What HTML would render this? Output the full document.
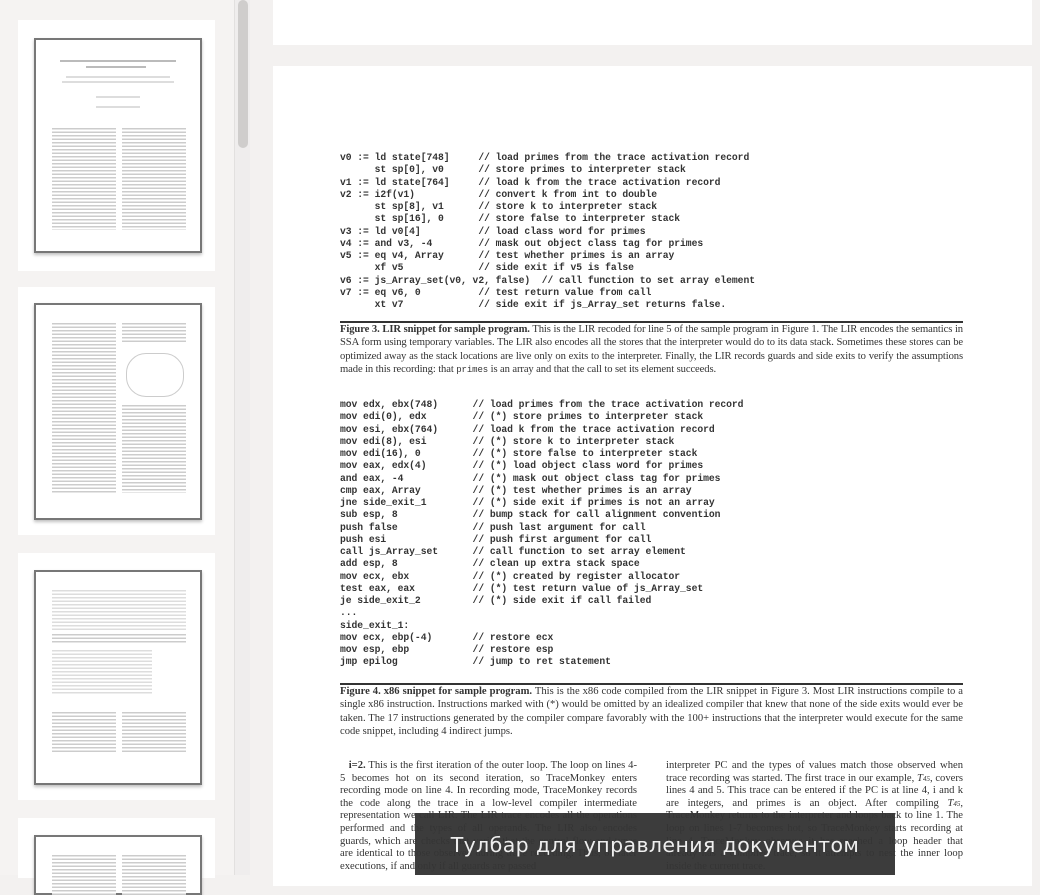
<!DOCTYPE html>
<html><head><meta charset="utf-8"><style>
*{margin:0;padding:0;box-sizing:border-box}
body{width:1040px;height:875px;overflow:hidden;background:#f3f1f0;position:relative;font-family:"Liberation Serif",serif;color:#222}
.side{position:absolute;left:0;top:0;width:234px;height:875px;background:#f5f3f2}
.card{position:absolute;left:18px;width:197px;background:#fff}
.th{position:absolute;left:16px;width:168px;border:2px solid #777;background:#fff;box-shadow:0 2px 3px rgba(0,0,0,.25)}
.ln{position:absolute;height:1.5px;background:#bbb}
.sb{position:absolute;left:234px;top:0;width:16px;height:875px;background:#efeded;border-left:1px solid #e2e0df}
.thumb{position:absolute;left:238px;top:0;width:10px;height:148px;background:#cfcdcc;border-radius:5px}
.page{position:absolute;left:273px;width:759px;background:#fff}
pre{position:absolute;font-family:"Liberation Mono",monospace;font-size:9.7px;line-height:12.25px;color:#333;font-weight:bold;letter-spacing:-.05px}
.cap{position:absolute;left:340px;width:623px;font-size:10.6px;line-height:13.3px;text-align:justify;color:#333}
.rule{position:absolute;left:340px;width:623px;height:1.5px;background:#333}
.col{position:absolute;width:297px;font-size:10.6px;line-height:12.6px;text-align:justify;color:#333}
.col sub{font-size:7px;vertical-align:0;line-height:0}
.tip{position:absolute;left:415px;top:813px;width:480px;height:62px;background:rgba(52,52,52,.96);color:#eee;font-family:"DejaVu Sans",sans-serif;font-size:20.5px;text-align:center;line-height:64px;letter-spacing:.4px}
</style></head><body>
<div class="side">
 <div class="card" style="top:20px;height:251px"><div class="th" style="top:18px;height:215px">
  <div class="ln" style="left:24px;top:20px;width:116px"></div><div class="ln" style="left:50px;top:26px;width:60px"></div>
  <div class="ln" style="left:30px;top:36px;width:104px;background:#ddd"></div><div class="ln" style="left:26px;top:41px;width:112px;background:#ddd"></div>
  <div class="ln" style="left:60px;top:56px;width:44px;background:#ddd"></div><div class="ln" style="left:60px;top:66px;width:44px;background:#ddd"></div>
  <div style="position:absolute;left:16px;top:88px;width:64px;height:102px;background:repeating-linear-gradient(#ccc 0 1.5px,#fff 1.5px 3.5px)"></div>
  <div style="position:absolute;left:86px;top:88px;width:64px;height:102px;background:repeating-linear-gradient(#ccc 0 1.5px,#fff 1.5px 3.5px)"></div>
 </div></div>
 <div class="card" style="top:287px;height:248px"><div class="th" style="top:16px;height:217px">
  <div style="position:absolute;left:16px;top:18px;width:64px;height:170px;background:repeating-linear-gradient(#ccc 0 1.5px,#fff 1.5px 3.5px)"></div>
  <div style="position:absolute;left:86px;top:18px;width:64px;height:20px;background:repeating-linear-gradient(#ccc 0 1.5px,#fff 1.5px 3.5px)"></div>
  <div style="position:absolute;left:90px;top:48px;width:58px;height:44px;border:1px solid #ccc;border-radius:20px"></div>
  <div style="position:absolute;left:86px;top:100px;width:64px;height:88px;background:repeating-linear-gradient(#ccc 0 1.5px,#fff 1.5px 3.5px)"></div>
 </div></div>
 <div class="card" style="top:553px;height:247px"><div class="th" style="top:17px;height:215px">
  <div style="position:absolute;left:16px;top:18px;width:134px;height:40px;background:repeating-linear-gradient(#ddd 0 1.5px,#fff 1.5px 3.5px)"></div>
  <div style="position:absolute;left:16px;top:62px;width:134px;height:10px;background:repeating-linear-gradient(#ccc 0 1.5px,#fff 1.5px 3.5px)"></div>
  <div style="position:absolute;left:16px;top:78px;width:100px;height:44px;background:repeating-linear-gradient(#ddd 0 1.5px,#fff 1.5px 3.5px)"></div>
  <div style="position:absolute;left:16px;top:140px;width:64px;height:40px;background:repeating-linear-gradient(#ccc 0 1.5px,#fff 1.5px 3.5px)"></div>
  <div style="position:absolute;left:86px;top:140px;width:64px;height:40px;background:repeating-linear-gradient(#ccc 0 1.5px,#fff 1.5px 3.5px)"></div>
 </div></div>
 <div class="card" style="top:818px;height:60px"><div class="th" style="top:17px;height:60px">
  <div style="position:absolute;left:16px;top:18px;width:64px;height:40px;background:repeating-linear-gradient(#ccc 0 1.5px,#fff 1.5px 3.5px)"></div>
  <div style="position:absolute;left:86px;top:18px;width:64px;height:40px;background:repeating-linear-gradient(#ccc 0 1.5px,#fff 1.5px 3.5px)"></div>
 </div></div>
</div>
<div class="sb"></div><div class="thumb"></div>
<div class="page" style="top:0;height:45px"></div>
<div class="page" style="top:66px;height:820px"></div>
<pre style="left:340px;top:152px">v0 := ld state[748]     // load primes from the trace activation record
      st sp[0], v0      // store primes to interpreter stack
v1 := ld state[764]     // load k from the trace activation record
v2 := i2f(v1)           // convert k from int to double
      st sp[8], v1      // store k to interpreter stack
      st sp[16], 0      // store false to interpreter stack
v3 := ld v0[4]          // load class word for primes
v4 := and v3, -4        // mask out object class tag for primes
v5 := eq v4, Array      // test whether primes is an array
      xf v5             // side exit if v5 is false
v6 := js_Array_set(v0, v2, false)  // call function to set array element
v7 := eq v6, 0          // test return value from call
      xt v7             // side exit if js_Array_set returns false.</pre>
<div class="rule" style="top:321px"></div>
<div class="cap" style="top:323px;letter-spacing:-.1px"><b>Figure 3. LIR snippet for sample program.</b> This is the LIR recoded for line 5 of the sample program in Figure 1. The LIR encodes the semantics in SSA form using temporary variables. The LIR also encodes all the stores that the interpreter would do to its data stack. Sometimes these stores can be optimized away as the stack locations are live only on exits to the interpreter. Finally, the LIR records guards and side exits to verify the assumptions made in this recording: that <span style="font-family:'Liberation Mono',monospace;font-size:9px">primes</span> is an array and that the call to set its element succeeds.</div>
<pre style="left:340px;top:399px">mov edx, ebx(748)      // load primes from the trace activation record
mov edi(0), edx        // (*) store primes to interpreter stack
mov esi, ebx(764)      // load k from the trace activation record
mov edi(8), esi        // (*) store k to interpreter stack
mov edi(16), 0         // (*) store false to interpreter stack
mov eax, edx(4)        // (*) load object class word for primes
and eax, -4            // (*) mask out object class tag for primes
cmp eax, Array         // (*) test whether primes is an array
jne side_exit_1        // (*) side exit if primes is not an array
sub esp, 8             // bump stack for call alignment convention
push false             // push last argument for call
push esi               // push first argument for call
call js_Array_set      // call function to set array element
add esp, 8             // clean up extra stack space
mov ecx, ebx           // (*) created by register allocator
test eax, eax          // (*) test return value of js_Array_set
je side_exit_2         // (*) side exit if call failed
...
side_exit_1:
mov ecx, ebp(-4)       // restore ecx
mov esp, ebp           // restore esp
jmp epilog             // jump to ret statement</pre>
<div class="rule" style="top:683px"></div>
<div class="cap" style="top:685px"><b>Figure 4. x86 snippet for sample program.</b> This is the x86 code compiled from the LIR snippet in Figure 3. Most LIR instructions compile to a single x86 instruction. Instructions marked with (*) would be omitted by an idealized compiler that knew that none of the side exits would ever be taken. The 17 instructions generated by the compiler compare favorably with the 100+ instructions that the interpreter would execute for the same code snippet, including 4 indirect jumps.</div>
<div class="col" style="left:340px;top:760px">&nbsp;&nbsp;&nbsp;<b>i=2.</b> This is the first iteration of the outer loop. The loop on lines 4-5 becomes hot on its second iteration, so TraceMonkey enters recording mode on line 4. In recording mode, TraceMonkey records the code along the trace in a low-level compiler intermediate representation we call LIR. The LIR trace encodes all the operations performed and the types of all operands. The LIR also encodes guards, which are checks that verify that the control flow and types are identical to those observed during trace recording. Thus, on later executions, if and only if all guards are passed</div>
<div class="col" style="left:666px;top:760px">interpreter PC and the types of values match those observed when trace recording was started. The first trace in our example, <i>T<sub>45</sub></i>, covers lines 4 and 5. This trace can be entered if the PC is at line 4, i and k are integers, and primes is an object. After compiling <i>T<sub>45</sub></i>, TraceMonkey returns to the interpreter and loops back to line 1. The loop on lines 1-7 becomes hot, so TraceMonkey starts recording at line 4, TraceMonkey observes it has reached a loop header that already has a compiled trace, so it attempts to nest the inner loop inside the current trace.</div>
<div class="tip">Тулбар для управления документом</div>
</body></html>
